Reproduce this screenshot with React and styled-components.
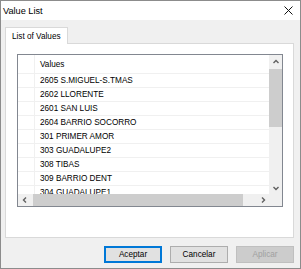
import React from 'react'
import styled, { createGlobalStyle } from 'styled-components'

const rows = [
  '2605 S.MIGUEL-S.TMAS',
  '2602 LLORENTE',
  '2601 SAN LUIS',
  '2604 BARRIO SOCORRO',
  '301 PRIMER AMOR',
  '303 GUADALUPE2',
  '308 TIBAS',
  '309 BARRIO DENT',
  '304 GUADALUPE1',
]

const Global = createGlobalStyle`
  body {
    margin: 0;
    font-family: "Liberation Sans", Arial, sans-serif;
    font-size: 8.2px;
    color: #000;
  }
`

const Window = styled.div`
  width: 301px;
  height: 269px;
  box-sizing: border-box;
  border: 1px solid #8c8c8c;
  background: #f0f0f0;
  display: flex;
  flex-direction: column;
`

const TitleBar = styled.div`
  height: 19px;
  background: #fff;
  display: flex;
  align-items: center;
  justify-content: space-between;
  padding: 0 7px 0 2px;
  font-size: 9.2px;
`

const Body = styled.div`
  flex: 1;
  display: flex;
  flex-direction: column;
  padding: 7px 6px 0 4px;
`

const TabStrip = styled.div`
  display: flex;
  height: 16px;
`

const Tab = styled.div`
  width: 63px;
  box-sizing: border-box;
  background: #fff;
  border: 1px solid #d9d9d9;
  border-bottom: none;
  display: flex;
  align-items: center;
  padding-left: 6px;
  margin-bottom: -1px;
  position: relative;
  z-index: 1;
`

const Panel = styled.div`
  height: 195px;
  box-sizing: border-box;
  background: #fff;
  border: 1px solid #d9d9d9;
  padding: 10px 0 0 11px;
`

const ListBox = styled.div`
  width: 266px;
  height: 153px;
  box-sizing: border-box;
  border: 1px solid #828790;
  display: grid;
  grid-template-columns: 1fr 13px;
  grid-template-rows: 1fr 12px;
  overflow: hidden;
`

const Rows = styled.div`
  overflow: hidden;
`

const Row = styled.div`
  display: flex;
  height: ${p => (p.$header ? 19 : 14)}px;
  box-sizing: border-box;
  border-bottom: 1px solid #f0f0f0;
`

const Selector = styled.div`
  width: 16px;
  border-right: 1px solid #f0f0f0;
`

const Cell = styled.div`
  flex: 1;
  display: flex;
  align-items: center;
  padding-left: 5px;
  white-space: nowrap;
`

const VScroll = styled.div`
  background: #f0f0f0;
  display: flex;
  flex-direction: column;
`

const HScroll = styled.div`
  background: #f0f0f0;
  display: flex;
`

const Arrow = styled.div`
  width: 13px;
  height: ${p => (p.$v ? 13 : 12)}px;
  display: flex;
  align-items: center;
  justify-content: center;
  flex-shrink: 0;
`

const VThumb = styled.div`
  height: 58px;
  margin: 1px 0;
  background: #cdcdcd;
`

const Space = styled.div`
  flex: 1;
`

const HThumb = styled.div`
  width: 210px;
  margin: 0 1px 0 2px;
  background: #cdcdcd;
`

const Corner = styled.div`
  background: #f0f0f0;
`

const Footer = styled.div`
  flex: 1;
  display: flex;
  justify-content: flex-end;
  align-items: flex-start;
  gap: 8px;
  padding-top: 8px;
`

const Button = styled.div`
  width: 58px;
  height: 17px;
  box-sizing: border-box;
  display: flex;
  align-items: center;
  justify-content: center;
  background: ${p => (p.$disabled ? '#cccccc' : '#e1e1e1')};
  color: ${p => (p.$disabled ? '#a0a0a0' : '#000')};
  border: 1px solid ${p => (p.$default ? '#0078d7' : p.$disabled ? '#bfbfbf' : '#adadad')};
  box-shadow: ${p => (p.$default ? 'inset 0 0 0 1px #0078d7' : 'none')};
`

const Chevron = ({ dir }) => {
  const paths = {
    up: 'M1.5 5 L4 2.5 L6.5 5',
    down: 'M1.5 3 L4 5.5 L6.5 3',
    left: 'M5 1.5 L2.5 4 L5 6.5',
    right: 'M3 1.5 L5.5 4 L3 6.5',
  }
  return (
    <svg width="8" height="8" viewBox="0 0 8 8">
      <path d={paths[dir]} fill="none" stroke="#606060" strokeWidth="1.4" />
    </svg>
  )
}

const CloseIcon = () => (
  <svg width="9" height="9" viewBox="0 0 9 9">
    <path d="M0.5 0.5 L8.5 8.5 M8.5 0.5 L0.5 8.5" stroke="#111" strokeWidth="1" />
  </svg>
)

export default function App() {
  return (
    <Window>
      <Global />
      <TitleBar>
        <span>Value List</span>
        <CloseIcon />
      </TitleBar>
      <Body>
        <TabStrip>
          <Tab>List of Values</Tab>
        </TabStrip>
        <Panel>
          <ListBox>
            <Rows>
              <Row $header>
                <Selector />
                <Cell>Values</Cell>
              </Row>
              {rows.map(r => (
                <Row key={r}>
                  <Selector />
                  <Cell>{r}</Cell>
                </Row>
              ))}
            </Rows>
            <VScroll>
              <Arrow $v><Chevron dir="up" /></Arrow>
              <VThumb />
              <Space />
              <Arrow $v><Chevron dir="down" /></Arrow>
            </VScroll>
            <HScroll>
              <Arrow><Chevron dir="left" /></Arrow>
              <HThumb />
              <Space />
              <Arrow><Chevron dir="right" /></Arrow>
            </HScroll>
            <Corner />
          </ListBox>
        </Panel>
        <Footer>
          <Button $default>Aceptar</Button>
          <Button>Cancelar</Button>
          <Button $disabled>Aplicar</Button>
        </Footer>
      </Body>
    </Window>
  )
}
